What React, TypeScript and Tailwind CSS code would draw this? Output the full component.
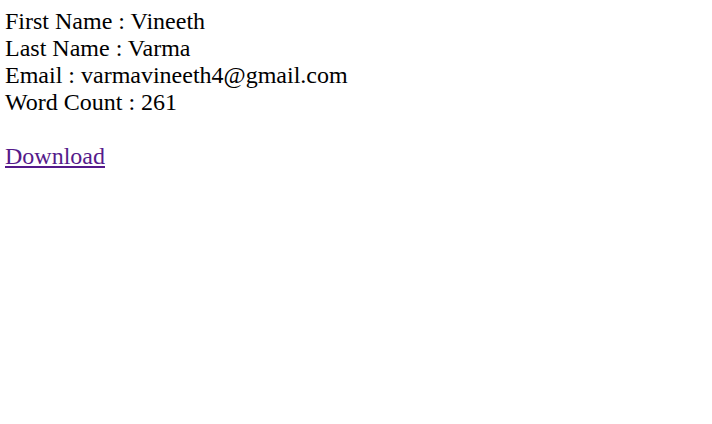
export default function App() {
  return (
    <div className="pt-2 pl-[5px] text-[24px] leading-[27px] text-black font-['Liberation_Serif','Times_New_Roman',serif]">
      <div>First Name : Vineeth</div>
      <div>Last Name : Varma</div>
      <div>Email : varmavineeth4@gmail.com</div>
      <div>Word Count : 261</div>
      <br />
      <a href="#" className="text-[#551a8b] underline">
        Download
      </a>
    </div>
  );
}
